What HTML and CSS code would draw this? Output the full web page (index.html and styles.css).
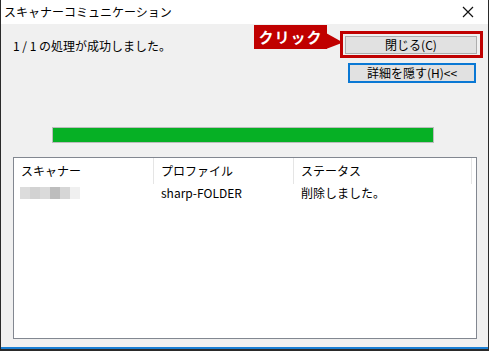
FILE: index.html
```html
<!DOCTYPE html>
<html lang="ja">
<head>
    <meta charset="UTF-8">
    <title>スキャナーコミュニケーション</title>
    <link rel="stylesheet" href="styles.css">
</head>
<body>
    <div class="window">
        <div class="titlebar">
            <span class="title">スキャナーコミュニケーション</span>
            <svg class="close-x" width="12" height="12" viewBox="0 0 12 12">
                <path d="M1 1 L11 11 M11 1 L1 11" stroke="#111" stroke-width="1.2" fill="none"/>
            </svg>
        </div>

        <div class="content">
            <div class="top">
                <p class="message">1 / 1 の処理が成功しました。</p>
                <div class="buttons">
                    <button class="btn btn-close">閉じる(C)</button>
                    <button class="btn btn-detail">詳細を隠す(H)&lt;&lt;</button>
                </div>
            </div>

            <div class="progress"><div class="progress-fill"></div></div>

            <div class="list">
                <div class="list-head">
                    <div class="col col-1">スキャナー</div>
                    <div class="col col-2">プロファイル</div>
                    <div class="col col-3">ステータス</div>
                </div>
                <div class="list-row">
                    <div class="col col-1">
                        <span class="mosaic">
                            <i class="m1"></i><i class="m2"></i><i class="m3"></i><i class="m4"></i><i class="m5"></i><i class="m6"></i>
                        </span>
                    </div>
                    <div class="col col-2">sharp-FOLDER</div>
                    <div class="col col-3">削除しました。</div>
                </div>
            </div>
        </div>

        <!-- annotation over the dialog -->
        <div class="callout">クリック</div>
    </div>
</body>
</html>
```

FILE: styles.css
```css
* {
    margin: 0;
    padding: 0;
    box-sizing: border-box;
}

body {
    background: #f0f0f0;
    font-family: 'Noto Sans CJK JP', 'Noto Sans', sans-serif;
    font-size: 12px;
    color: #000;
}

.window {
    position: relative;
    width: 489px;
    height: 351px;
    border-left: 1px solid #2a2a2a;
    border-right: 1px solid #2a2a2a;
    border-bottom: 2px solid #2a2a2a;
    display: flex;
    flex-direction: column;
}

.titlebar {
    height: 24px;
    background: #fff;
    display: flex;
    align-items: center;
    justify-content: space-between;
    padding: 0 14px 0 3px;
}

.title {
    font-size: 12px;
    line-height: 16px;
}

.content {
    flex: 1;
    background: #f0f0f0;
    border-bottom: 2px solid #1a7fd4;
    display: flex;
    flex-direction: column;
}

.top {
    display: flex;
    justify-content: space-between;
    align-items: flex-start;
    padding: 12px 11px 0 12px;
}

.message {
    margin-top: 2px;
    line-height: 16px;
}

.buttons {
    width: 132px;
    display: flex;
    flex-direction: column;
    align-items: flex-start;
    gap: 9px;
}

.btn {
    font-family: inherit;
    font-size: 12px;
    background: #e1e1e1;
    color: #000;
    border: 1px solid #adadad;
    line-height: 14px;
}

.btn-close {
    position: relative;
    width: 132px;
    height: 18px;
}

/* red highlight frame drawn over the button */
.btn-close::after {
    content: '';
    position: absolute;
    left: -6px;
    right: -7px;
    top: -6px;
    bottom: -5px;
    border: 3px solid #c00000;
}

.btn-detail {
    margin-left: 3px;
    width: 128px;
    height: 20px;
    border: 2px solid #0a78d4;
}

.progress {
    margin: 44px 0 0 51px;
    width: 382px;
    height: 16px;
    border: 1px solid #bcbcbc;
    background: #e6e6e6;
}

.progress-fill {
    width: 100%;
    height: 100%;
    background: #06b025;
}

.list {
    margin: 14px 11px 0 12px;
    height: 182px;
    background: #fff;
    border: 1px solid #828790;
}

.list-head,
.list-row {
    display: flex;
}

.list-head {
    height: 26px;
    align-items: center;
}

.list-head .col {
    border-right: 1px solid #e5e5e5;
    height: 100%;
    display: flex;
    align-items: center;
}

.list-row {
    height: 18px;
    align-items: center;
}

.col {
    padding-left: 7px;
    line-height: 16px;
}

.col-1 { width: 140px; }
.col-2 { width: 140px; }
.col-3 { width: 178px; }

.mosaic {
    display: flex;
    height: 12px;
    margin-left: -1px;
}

.mosaic i {
    display: block;
    width: 10px;
    height: 12px;
}

.m1 { background: #dcdcdc; }
.m2 { background: #d2d2d2; }
.m3 { background: #dadada; }
.m4 { background: #bdbdbd; }
.m5 { background: #d6d6d6; }
.m6 { background: #f0f0f0; }

.callout {
    position: absolute;
    left: 253px;
    top: 25px;
    width: 73px;
    height: 24px;
    background: #c00000;
    color: #fff;
    font-size: 15px;
    font-weight: bold;
    line-height: 24px;
    text-align: center;
    letter-spacing: 1px;
}

.callout::after {
    content: '';
    position: absolute;
    left: 72px;
    top: 8px;
    width: 17px;
    height: 16px;
    background: #c00000;
    clip-path: polygon(0 0, 100% 60%, 0 100%);
}
```
